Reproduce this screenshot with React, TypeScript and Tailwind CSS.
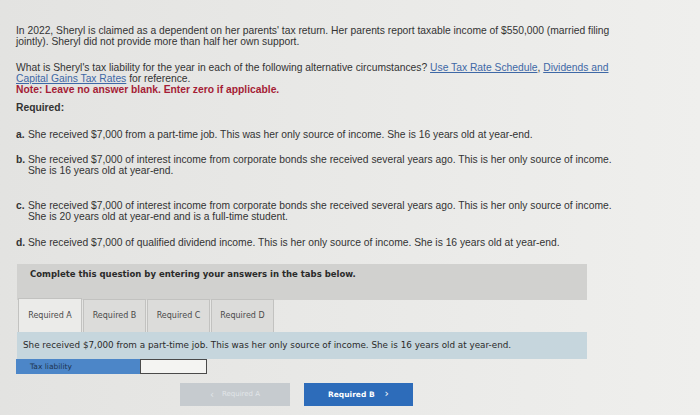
import React from "react";

const body = "font-['Liberation_Sans',Arial,sans-serif] text-[10.3px] leading-[11px] text-[#333]";
const ui = "font-['DejaVu_Sans',Verdana,sans-serif]";

const items = [
  {
    key: "a.",
    text: "She received $7,000 from a part-time job. This was her only source of income. She is 16 years old at year-end.",
    gap: "mt-[16px]",
  },
  {
    key: "b.",
    text: "She received $7,000 of interest income from corporate bonds she received several years ago. This is her only source of income. She is 16 years old at year-end.",
    gap: "mt-[14px]",
  },
  {
    key: "c.",
    text: "She received $7,000 of interest income from corporate bonds she received several years ago. This is her only source of income. She is 20 years old at year-end and is a full-time student.",
    gap: "mt-[24px]",
  },
  {
    key: "d.",
    text: "She received $7,000 of qualified dividend income. This is her only source of income. She is 16 years old at year-end.",
    gap: "mt-[15px]",
  },
];

const tabs = ["Required A", "Required B", "Required C", "Required D"];

export default function App() {
  return (
    <div className="w-[700px] h-[415px] overflow-hidden bg-gradient-to-r from-[#e3e3e1] via-[#e9e9e7] to-[#efefed]">
      <div className={`${body} pl-[16px] pt-[25px]`}>
        <p className="w-[622px]">
          In 2022, Sheryl is claimed as a dependent on her parents' tax return. Her parents report taxable income of $550,000 (married filing jointly). Sheryl did not provide more than half her own support.
        </p>
        <p className="mt-[15px] w-[622px]">
          What is Sheryl's tax liability for the year in each of the following alternative circumstances?{" "}
          <span className="text-[#3e68a6] underline">Use Tax Rate Schedule</span>,{" "}
          <span className="text-[#3e68a6] underline">Dividends and Capital Gains Tax Rates</span> for reference.
        </p>
        <p className="font-bold text-[#a51d36]">Note: Leave no answer blank. Enter zero if applicable.</p>

        <p className="mt-[7px] font-bold">Required:</p>

        {items.map((it) => (
          <div key={it.key} className={`${it.gap} flex w-[612px]`}>
            <span className="w-[12px] shrink-0 font-bold">{it.key}</span>
            <span>{it.text}</span>
          </div>
        ))}
      </div>

      <div className={`${ui} mt-[16px] ml-[17px] w-[570px]`}>
        <div className="h-[36px] bg-[#d1d1cf] pl-[13px] pt-[4px] text-[8.5px] font-bold text-[#2a2a2a]">
          Complete this question by entering your answers in the tabs below.
        </div>

        <div className="mt-[-2px] flex items-end gap-[1px] pl-[1px]">
          {tabs.map((t, i) => (
            <div
              key={t}
              className={
                i === 0
                  ? "flex h-[34px] w-[64px] items-center justify-center border border-b-0 border-[#c2c2c0] bg-[#ebebe9] text-[8px] text-[#4a4a4a]"
                  : "flex h-[33px] w-[63px] items-center justify-center border border-b-0 border-[#c2c2c0] bg-[#dcdcda] text-[8px] text-[#4a4a4a]"
              }
            >
              {t}
            </div>
          ))}
        </div>

        <div className="flex h-[27px] items-center bg-[#c6d6dd] pl-[6px] text-[8.8px] text-[#2a2a2a]">
          She received $7,000 from a part-time job. This was her only source of income. She is 16 years old at year-end.
        </div>

        <div className="ml-[-1px] flex h-[15px]">
          <div className="flex w-[124px] items-center bg-[#4c86c8] pl-[14px] text-[7.5px] text-[#1d3552]">
            Tax liability
          </div>
          <div className="w-[67px] border border-[#4a4a4a] bg-[#f4f4f2]" />
        </div>

        <div className="mt-[9px] flex gap-[14px] pl-[163px]">
          <div className="flex h-[23px] w-[110px] items-center justify-center gap-[8px] bg-[#c6cbcf] text-[7px] text-[#e1e5e8]">
            <span className="text-[10px]">‹</span>
            <span>Required A</span>
          </div>
          <div className="flex h-[23px] w-[109px] items-center justify-center gap-[10px] bg-[#2d6cba] text-[7.5px] font-bold text-white">
            <span>Required B</span>
            <span className="text-[11px] font-normal">›</span>
          </div>
        </div>
      </div>
    </div>
  );
}
